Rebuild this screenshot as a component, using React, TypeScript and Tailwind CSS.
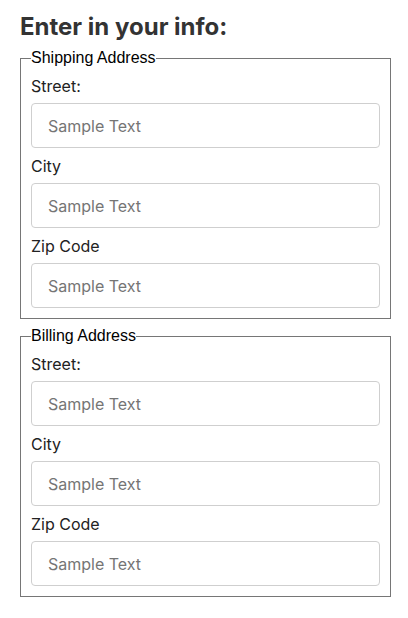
import React from 'react';

const fields = ['Street:', 'City', 'Zip Code'];

function AddressFieldset({ title }: { title: string }) {
  return (
    <fieldset className="w-[371px] border border-[#767676] px-[10px] pt-px pb-[10px]">
      <legend className="font-['Liberation_Sans',Arial,sans-serif] text-base leading-[18px] text-black">
        {title}
      </legend>
      {fields.map((f) => (
        <div key={f}>
          <label className="block mt-[6px] mb-[5px] text-base leading-6 text-[#222]">{f}</label>
          <input
            type="text"
            placeholder="Sample Text"
            className="block h-[45px] w-full rounded-[4px] border border-[#cfcfcf] bg-white px-4 text-base text-[#222] placeholder:text-[#757575] outline-none"
          />
        </div>
      ))}
    </fieldset>
  );
}

export default function App() {
  return (
    <div className="min-h-screen bg-white px-5 pt-3 font-['Inter',sans-serif]">
      <h2 className="mb-2 text-2xl font-bold leading-[29px] text-[#333]">Enter in your info:</h2>
      <AddressFieldset title="Shipping Address" />
      <div className="h-[8px]" />
      <AddressFieldset title="Billing Address" />
    </div>
  );
}
